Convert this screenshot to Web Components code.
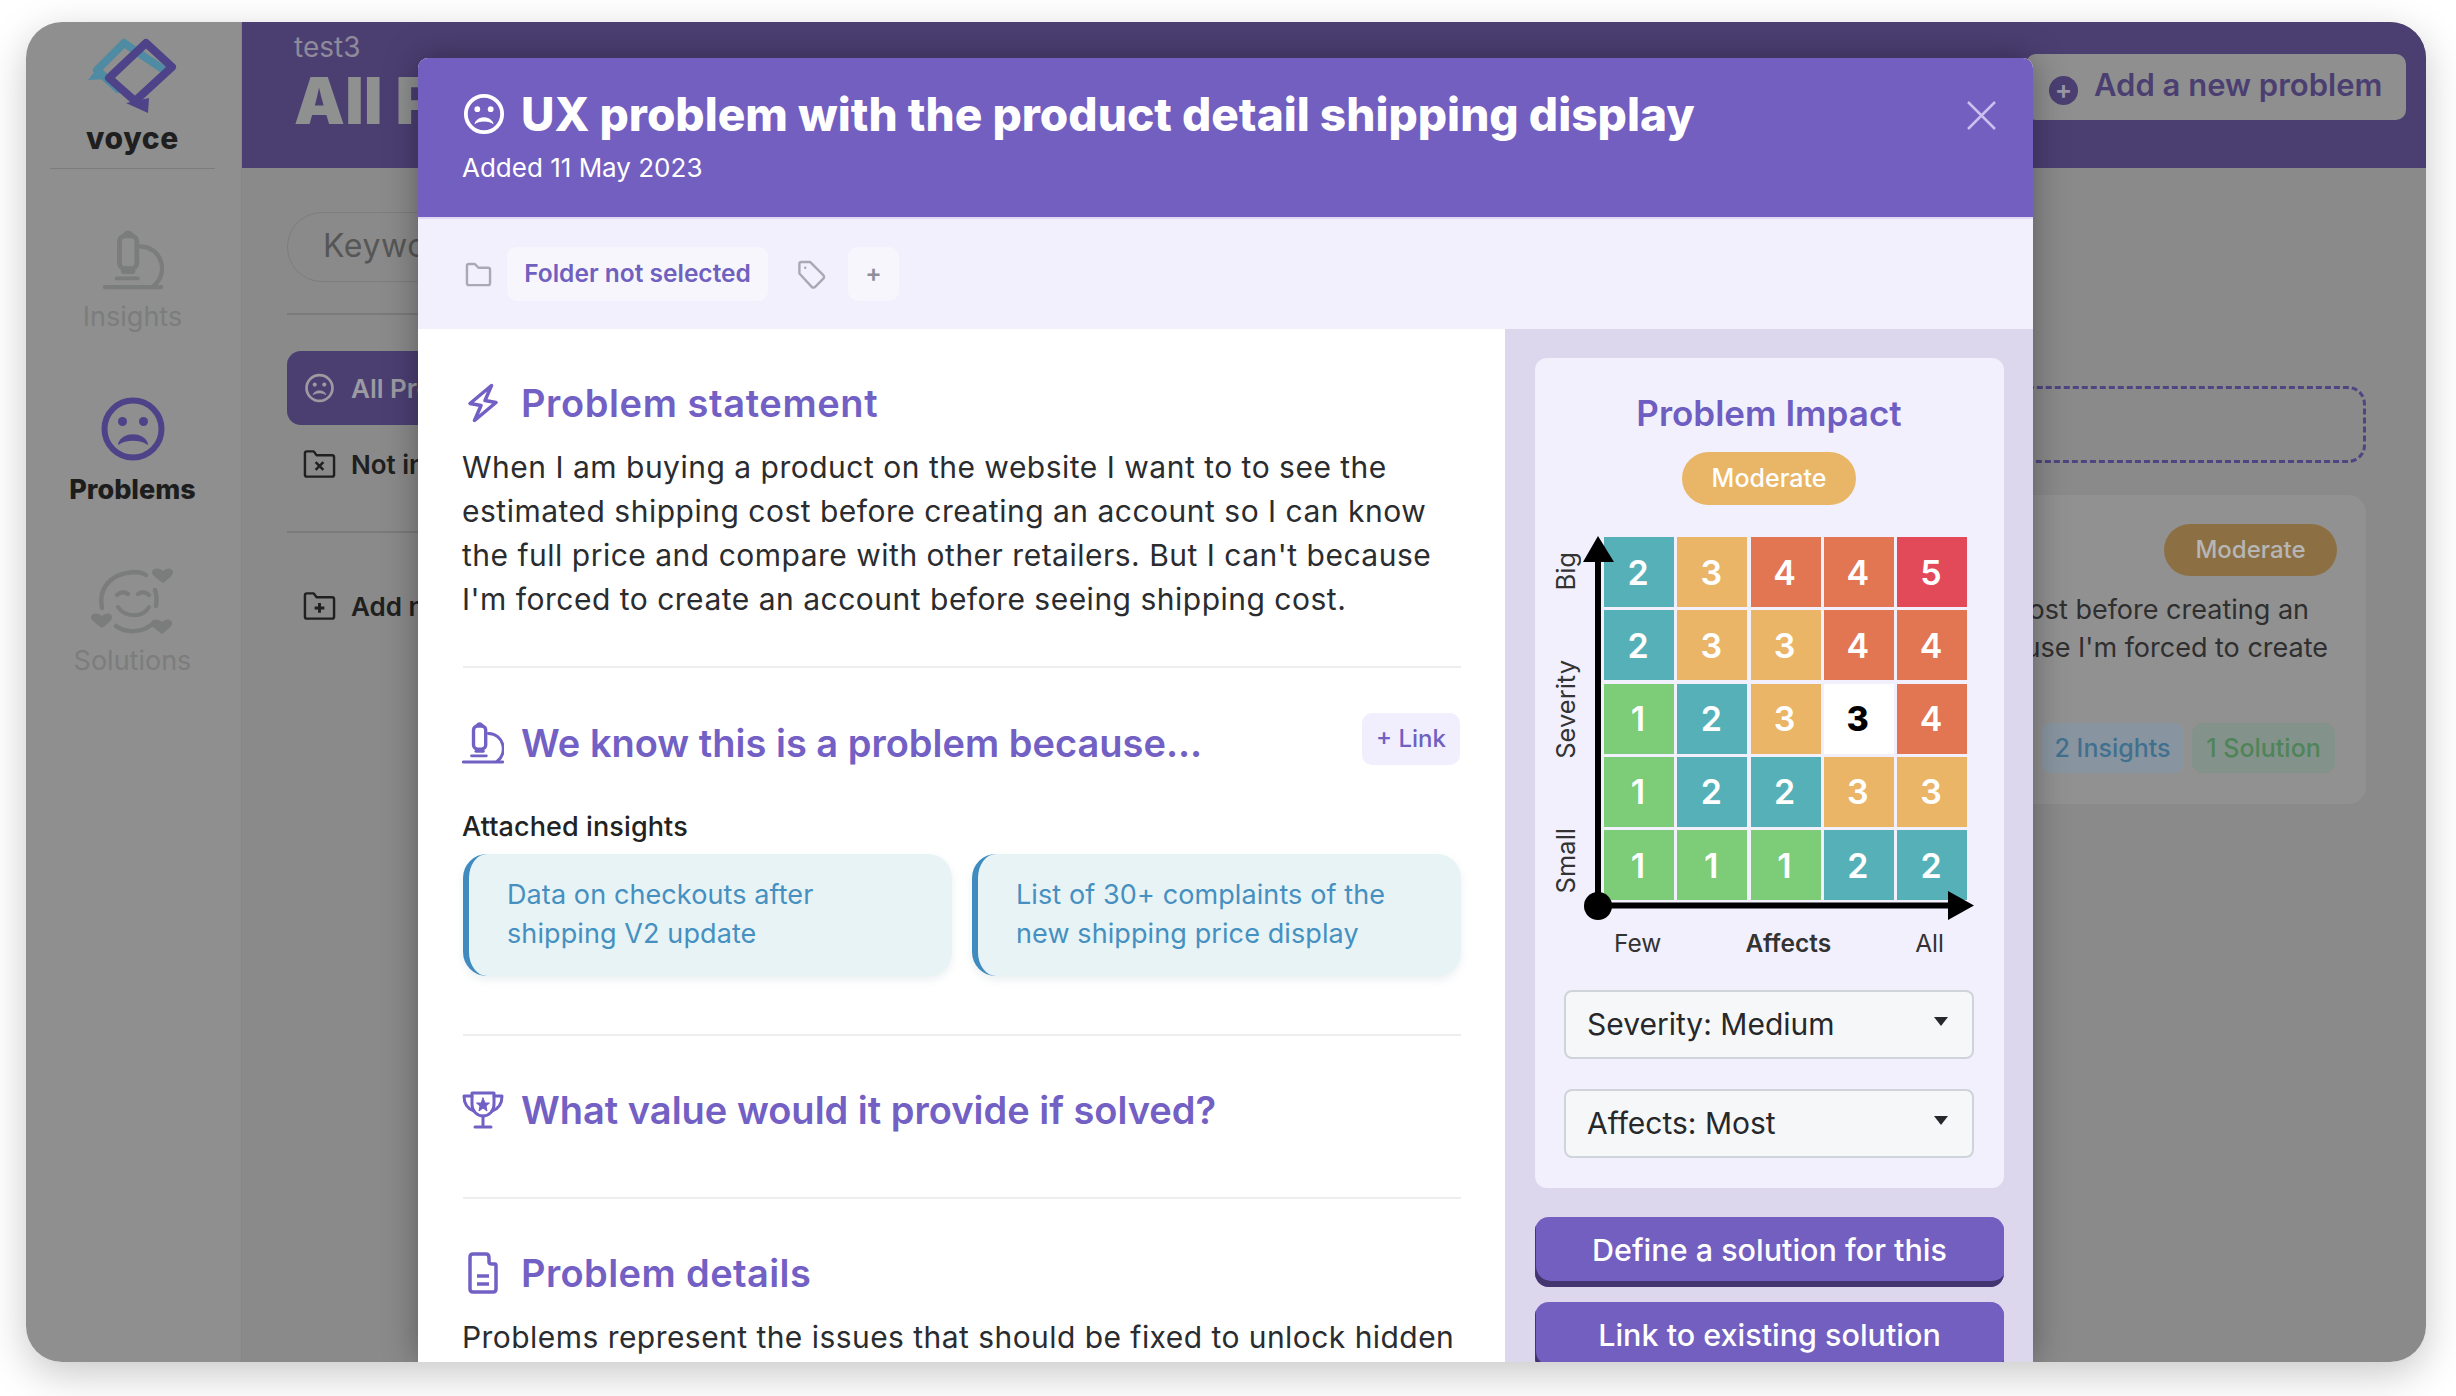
<!DOCTYPE html>
<html>
<head>
<meta charset="utf-8">
<title>voyce problems</title>
<style>
html,body{margin:0;padding:0;background:#fff;height:100%;overflow:hidden}
body{font-family:Inter,"Noto Sans",sans-serif;color:#2a2c2f}
</style>
</head>
<body>
<app-window></app-window>
<script>
// icons
const frown = `<svg viewBox="0 0 44 44" width="100%" height="100%"><circle cx="22" cy="22" r="19" fill="none" stroke="currentColor" stroke-width="4"/><circle cx="15" cy="17" r="3" fill="currentColor"/><circle cx="29" cy="17" r="3" fill="currentColor"/><path d="M12.500 32C15 24 29 24 31.500 32C27 28.500 17 28.500 12.500 32Z" fill="currentColor" stroke="currentColor" stroke-width="1" stroke-linejoin="round"/></svg>`
const scope = `<svg viewBox="0 0 62 62" width="100%" height="100%" fill="none" stroke="currentColor" stroke-linecap="round"><rect x="17" y="6" width="18" height="34" rx="6" stroke-width="5"/><path d="M22 5 Q26 0 30 5" stroke-width="4"/><path d="M21 43 L31 43" stroke-width="5"/><path d="M14 50 H36" stroke-width="4"/><path d="M2 59 H60" stroke-width="4.500"/><path d="M39 17 C62 18 68 46 52 58" stroke-width="4.500"/></svg>`
const bolt = `<svg viewBox="0 0 30 40" width="100%" height="100%" fill="none" stroke="currentColor" stroke-width="3.500" stroke-linejoin="round"><path d="M23.500 2.500 L2 20.500 L13 22.500 L6.500 37.500 L28 19.500 L17 17.500 Z"/></svg>`
const trophy = `<svg viewBox="0 0 42 38" width="100%" height="100%" fill="none" stroke="currentColor" stroke-width="3" stroke-linejoin="round" stroke-linecap="round"><path d="M10 2 H32 V13 C32 21 26 25 21 25 C16 25 10 21 10 13 Z"/><path d="M10 5 H2 C2 14 6 18 12 20"/><path d="M32 5 H40 C40 14 36 18 30 20"/><path d="M21 25 V35"/><path d="M13 36 H29"/><path d="M21 7 L23 12 L27.500 12 L24 15 L25 20 L21 17 L17 20 L18 15 L14.500 12 L19 12 Z" fill="currentColor" stroke-width="1"/></svg>`
const doc = `<svg viewBox="0 0 30 42" width="100%" height="100%" fill="none" stroke="currentColor" stroke-width="3.500" stroke-linejoin="round"><path d="M5 2 H18 Q21 2 21 6 V10 Q21 12 24 12 H27 Q28 12 28 14 V37 Q28 40 25 40 H5 Q2 40 2 37 V5 Q2 2 5 2Z"/><path d="M9 24 H21 M9 32 H21"/></svg>`
const folder = `<svg viewBox="0 0 28 26" width="100%" height="100%" fill="none" stroke="currentColor" stroke-width="2.500" stroke-linejoin="round"><path d="M2 4 Q2 2 4 2 H10 L14 6 H24 Q26 6 26 8 V22 Q26 24 24 24 H4 Q2 24 2 22 Z"/></svg>`
const tag = `<svg viewBox="0 0 30 30" width="100%" height="100%" fill="none" stroke="currentColor" stroke-width="2.500" stroke-linejoin="round"><path d="M3 4 Q3 2 5 2 H14 L28 16 Q29 18 28 19 L19 28 Q17 29 16 28 L3 14 Z"/><circle cx="9" cy="8" r="1.300" fill="currentColor" stroke="none"/></svg>`
const folderBox = sign => `<svg viewBox="0 0 34 30" width="100%" height="100%" fill="none" stroke="currentColor" stroke-width="2.500" stroke-linejoin="round"><path d="M2 4 Q2 2 4 2 H11 L14 6 H30 Q32 6 32 8 V26 Q32 28 30 28 H4 Q2 28 2 26 Z"/>${sign}</svg>`
const smile = `<svg viewBox="0 0 82 68" width="100%" height="100%" fill="none" stroke="currentColor" stroke-width="4.500" stroke-linecap="round"><path d="M11 40 C7 22 18 6 42 4 C48 4 52 5 55 7"/><path d="M64 22 C66 28 66 32 65 38"/><path d="M25 58 C34 65 50 65 60 57"/><path d="M26 27 Q31 22 37 26 M47 26 Q53 22 58 27"/><path d="M27 39 C34 50 52 50 58 39" stroke-width="4"/><g fill="currentColor" stroke="none"><path d="M72 15 C64 9 61 7 61 4 C61 0 68 -1 72 3 C76 -1 82 0 82 4 C82 7 79 10 72 15Z"/><path d="M11 60 C3 54 0 52 0 49 C0 45 7 44 11 48 C15 44 21 45 21 49 C21 52 18 55 11 60Z"/><path d="M71 66 C63 60 60 58 60 55 C60 51 67 50 71 54 C75 50 81 51 81 55 C81 58 78 61 71 66Z"/></g></svg>`
const logo = `<svg viewBox="86 36 90 78" width="90" height="78" fill="none" stroke-width="8" stroke-linejoin="round" stroke-linecap="round"><path d="M122 43 L95 70 L116 89 M122 43 L162 70" stroke="#4f8ba3"/><path d="M86 80 L106 79 L97 66 Z" fill="#4f8ba3" stroke="none"/><path d="M144 43 L170 67 L133 101 L107 78 Z" stroke="#4e4389"/><path d="M124 103 L147 98 L146 113 Z" fill="#4e4389" stroke="none"/></svg>`

// every element here is just markup in an open shadow root
class Base extends HTMLElement {
    connectedCallback() {
        if (this.shadowRoot) return
        this.attachShadow({ mode: 'open' }).innerHTML = this.render()
    }
    attr(name) { return this.getAttribute(name) || '' }
}
const define = (tag, render) => customElements.define(tag, class extends Base { render() { return render(this) } })

define('nav-item', e => `<style>
:host{display:flex;flex-direction:column;align-items:center;color:#7b7d7d}
:host([active]){color:#1d1d1d}
.i{display:flex;align-items:center;justify-content:center}
span{font-size:27px;line-height:36px;margin-top:${e.attr('gap')}px}
:host([active]) span{font-weight:800;font-size:27px}
:host([active]) .i{color:#4e4389}
</style><div class="i" style="width:${e.attr('w')}px;height:${e.attr('h')}px"><slot></slot></div><span>${e.attr('label')}</span>`)

define('side-nav', () => `<style>
:host{display:flex;flex-direction:column;width:216px;flex:none;background:#8f8f8f;align-items:center;border-right:1px solid #868686;box-sizing:border-box;padding-right:2px}
.brand{width:165px;height:147px;border-bottom:1px solid #7c7c7c;display:flex;flex-direction:column;align-items:center;padding-top:14px;box-sizing:border-box}
b{font-size:30px;font-weight:800;line-height:34px;color:#1f1f1f;margin-top:7px;letter-spacing:.6px}
.a{margin-top:61px}.b{margin-top:61px}.c{margin-top:60px}
</style>
<div class="brand">${logo}<b>voyce</b></div>
<nav-item class="a" label="Insights" w="62" h="60" gap="9">${scope}</nav-item>
<nav-item class="b" label="Problems" w="66" h="66" gap="10" active>${frown}</nav-item>
<nav-item class="c" label="Solutions" w="82" h="68" gap="7">${smile}</nav-item>`)

define('folder-list', () => `<style>
:host{display:block;width:352px;flex:none;color:#202020}
.search{height:70px;margin-top:44px;border:1.500px solid #7d7d7d;border-radius:36px;box-sizing:border-box;padding-left:35px;font-size:32px;letter-spacing:.6px;line-height:66px;color:#565656;white-space:nowrap;overflow:hidden}
hr{border:0;border-top:2px solid #7a7a7a;margin:0}
.row{height:74px;display:flex;align-items:center;gap:15px;padding-left:16px;font-size:26px;font-weight:600;white-space:nowrap;border-radius:14px}
.row i{width:33px;height:30px;display:block;flex:none}
.on{background:#4b3f72;color:#9c9aa2}
</style>
<div class="search">Keyword</div>
<hr style="margin-top:31px">
<div class="row on" style="margin-top:36px"><i>${frown}</i>All Problems</div>
<div class="row" style="margin-top:2px"><i>${folderBox('<path d="M13 13 L21 21 M21 13 L13 21"/>')}</i>Not in a</div>
<hr style="margin-top:30px">
<div class="row" style="margin-top:36px"><i>${folderBox('<path d="M17 12 V22 M12 17 H22" stroke-width="3"/>')}</i>Add new</div>`)

define('problem-row', () => `<style>
:host{display:block;margin-top:32px;height:309px;background:#919191;border-radius:18px;box-sizing:border-box;padding:29px 29px 0 0}
.top{display:flex;justify-content:flex-end}
.pill{width:173px;height:52px;border-radius:26px;background:#8c7044;color:#b6b6b6;font-size:24px;font-weight:500;line-height:52px;text-align:center}
.t{font-size:27px;line-height:38px;color:#2f2f2f;text-align:right;white-space:nowrap;margin-top:15px}
.t div:first-child{margin-right:28px}
.t div:last-child{margin-right:9px}
.chips{display:flex;justify-content:flex-end;gap:8px;margin-top:56px;margin-right:2px}
.chips span{height:50px;width:143px;border-radius:10px;font-size:25px;font-weight:500;line-height:50px;text-align:center}
.x{background:#8895a0;color:#41708f}.y{background:#83938b;color:#4f8459}
</style>
<div class="top"><div class="pill">Moderate</div></div>
<div class="t"><div>cost before creating an</div><div>because I'm forced to create</div></div>
<div class="chips"><span class="x">2 Insights</span><span class="y">1 Solution</span></div>`)

define('main-area', () => `<style>
:host{display:block;flex:1;background:#8a8a8a;min-width:0}
header{height:146px;background:#4b3f72;display:flex;justify-content:space-between;padding:0 20px 0 52px}
.sub{font-size:28px;line-height:34px;color:#8e8a9a;margin-top:8px}
h1{margin:1px 0 0;font-size:64px;line-height:72px;font-weight:900;color:#8f9090;white-space:nowrap}
.add{margin-top:32px;height:66px;width:380px;background:#8f8f8f;border-radius:10px;display:flex;align-items:center;box-sizing:border-box;padding-left:23px;gap:16px;color:#4b3f72;font-size:31px;font-weight:600;white-space:nowrap}
.add span{margin-top:-5px}
.add i{width:29px;height:29px;border-radius:50%;background:#4b3f72;color:#9a97a8;font-style:normal;font-size:26px;line-height:28px;text-align:center;margin-top:6px;flex:none}
.body{display:flex;padding:0 60px 0 45px}
.list{flex:1;min-width:0;padding-left:20px}
.drop{margin-top:218px;height:77px;border:3px dashed #4f4580;border-radius:18px;box-sizing:border-box}
</style>
<header><div><div class="sub">test3</div><h1>All Pro</h1></div><div class="add"><i>+</i><span>Add a new problem</span></div></header>
<div class="body"><folder-list></folder-list><div class="list"><div class="drop"></div><problem-row></problem-row></div></div>`)

define('section-head', e => `<style>
:host{display:flex;align-items:center;height:56px;color:#7360c4;margin-left:-1px}
.i{width:59px;flex:none;display:flex;justify-content:center;box-sizing:border-box;padding-right:17px}
.i div{width:${e.attr('w')}px;height:${e.attr('h')}px}
h2{margin:0;font-size:38px;font-weight:600;line-height:56px;white-space:nowrap;flex:1;letter-spacing:${e.attr('ls') || 0}px}
</style><div class="i"><div><slot name="icon"></slot></div></div><h2>${e.attr('label')}</h2><slot></slot>`)

define('insight-card', () => `<style>
:host{display:block;height:122px;width:489px;box-sizing:border-box;background:#e8f3f6;border-left:6px solid #3f8bbf;border-radius:24px;padding:21px 60px 0 38px;font-size:27px;letter-spacing:.1px;line-height:39px;color:#4590c0;box-shadow:0 4px 8px rgba(60,100,120,.1)}
</style><slot></slot>`)

define('impact-matrix', () => {
    const data = [
        [2, 3, 4, 4, 5],
        [2, 3, 3, 4, 4],
        [1, 2, 3, 0, 4],
        [1, 2, 2, 3, 3],
        [1, 1, 1, 2, 2]
    ]
    const colors = { 1: '#7ccc78', 2: '#55b1b7', 3: '#eab566', 4: '#e27552', 5: '#e34a59' }
    const cells = data.flat().map(v => v
        ? `<div style="background:${colors[v]}">${v}</div>`
        : `<div class="me">3</div>`).join('')
    return `<style>
:host{display:block;position:relative;margin:32px 0 0 -20px;width:430px}
.wrap{display:grid;grid-template-columns:60px 363px;grid-template-rows:363px 90px}
.sev{width:44px;height:363px;box-sizing:border-box;padding:15px 0 7px;display:flex;flex-direction:column;justify-content:space-between;align-items:center}
.sev span{writing-mode:vertical-rl;transform:rotate(180deg);font-size:25.500px;line-height:28px;color:#333}
.grid{display:grid;grid-template-columns:repeat(5,70px);grid-auto-rows:70px;gap:3.250px}
.grid div{display:flex;align-items:center;justify-content:center;color:#fff;font-size:34px;font-weight:600;padding-right:2px;box-sizing:border-box}
.grid .me{background:#fff;color:#000;font-weight:800}
.aff{grid-column:2;display:flex;justify-content:space-between;padding:24px 23px 0 10px;font-size:24.500px;line-height:38px;color:#333}
.aff b{font-weight:600}
svg{position:absolute;left:0;top:0;overflow:visible;pointer-events:none}
</style>
<div class="wrap"><div class="sev"><span>Big</span><span>Severity</span><span>Small</span></div><div class="grid">${cells}</div><div class="aff"><span>Few</span><b>Affects</b><span>All</span></div></div>
<svg width="430" height="400"><path d="M54 10 V369 M54 368.500 H410" stroke="#000" stroke-width="6" fill="none"/><path d="M54 -1 L39 25 L70 25Z M404 354 L430 368.500 L404 383Z"/><circle cx="54" cy="369" r="14"/></svg>`
})

define('select-box', e => `<style>
:host{display:flex;align-items:center;justify-content:space-between;height:69px;width:410px;box-sizing:border-box;background:#f6f7f9;border:2px solid #ced4da;border-radius:8px;padding:0 24px 0 21px;font-size:30px;color:#26282b}
span{margin-top:-2px}
i{border-left:7px solid transparent;border-right:7px solid transparent;border-top:9px solid #26282b;margin-top:-6px}
</style><span>${e.attr('label')}</span><i></i>`)

define('action-button', e => `<style>
:host{display:block;height:70px;background:#735fc0;border-radius:14px;box-shadow:inset 2px -7px 0 -1px #43356f,inset -2px 0 0 #735fc0;color:#fff;font-size:30.500px;font-weight:500;line-height:65px;text-align:center;white-space:nowrap}
</style><slot></slot>`)

define('problem-modal', () => `<style>
:host{display:block;position:absolute;left:392px;top:36px;width:1615px;bottom:0;border-radius:10px 10px 0 0;overflow:hidden;background:#fff}
.head{height:159px;background:#735fc0;color:#fff;box-sizing:border-box;padding-left:45px;position:relative}
.ttl{display:flex;align-items:center;height:72px;padding-top:20px;gap:16px;box-sizing:content-box}
.ttl i{width:42px;height:42px;flex:none}
.ttl h1{margin:0;font-size:46px;line-height:56px;font-weight:800;white-space:nowrap}
.added{font-size:26px;line-height:36px;margin-top:0;margin-left:-1px}
.x{position:absolute;left:1549px;top:43px;width:29px;height:29px;color:#cbbfee}
.bar{height:112px;background:#f2f0fd;border-top:2px solid #ded8f5;box-sizing:border-box;display:flex;align-items:center;padding-left:47px}
.bar i{display:block;flex:none;color:#a9a9b4}
.chip{height:54px;background:#f7f6fd;border-radius:10px;display:flex;align-items:center;justify-content:center;font-size:24.500px;font-weight:600;color:#7060c0;padding-bottom:2px;box-sizing:border-box}
.cols{display:flex;height:1033px}
.left{flex:1;box-sizing:border-box;padding:46px 44px 0 45px;min-width:0}
p{margin:0 0 0 -1px;font-size:30px;letter-spacing:.5px;line-height:44px;color:#2a2c2f}
hr{border:0;border-top:2px solid #eee;margin:0}
.link{width:98px;height:52px;background:#f1effd;border-radius:10px;font-size:24px;font-weight:500;color:#7060c0;text-align:center;line-height:52px;margin:-8px 1px 0 0}
h3{margin:38px 0 0 -1px;font-size:27px;letter-spacing:.1px;line-height:36px;font-weight:500;color:#222}
.cards{display:flex;justify-content:space-between;margin-top:9px}
.right{width:528px;flex:none;background:#dcd7ec;box-sizing:border-box;padding:29px 29px 0 30px}
.card{background:#f2f0fd;border-radius:12px;height:830px;box-sizing:border-box;padding:30px 30px 0 29px}
h4{margin:0;text-align:center;font-size:35px;line-height:50px;font-weight:600;color:#6e5ec2}
.mod{width:174px;height:53px;border-radius:27px;margin:14px auto 0;background:#e9b566;color:#fff;font-size:25px;font-weight:500;line-height:53px;text-align:center}
select-box{margin-bottom:30px}
</style>
<div class="head">
  <div class="ttl"><i>${frown}</i><h1>UX problem with the product detail shipping display</h1></div>
  <div class="added">Added 11 May 2023</div>
  <svg class="x" viewBox="0 0 29 29" fill="none" stroke="currentColor" stroke-width="2.500"><path d="M1 1 L28 28 M28 1 L1 28"/></svg>
</div>
<div class="bar">
  <i style="width:27px;height:25px">${folder}</i>
  <div class="chip" style="width:261px;margin-left:15px">Folder not selected</div>
  <i style="width:30px;height:29px;margin-left:28px">${tag}</i>
  <div class="chip" style="width:51px;margin-left:22px;color:#8f8f9b">+</div>
</div>
<div class="cols">
  <div class="left">
    <section-head label="Problem statement" ls="0.6" w="30" h="40"><span slot="icon">${bolt}</span></section-head>
    <p style="margin-top:14px">When I am buying a product on the website I want to to see the estimated shipping cost before creating an account so I can know the full price and compare with other retailers. But I can't because I'm forced to create an account before seeing shipping cost.</p>
    <hr style="margin-top:45px">
    <section-head label="We know this is a problem because..." w="42" h="42" style="margin-top:47px"><span slot="icon">${scope}</span><div class="link">+ Link</div></section-head>
    <h3>Attached insights</h3>
    <div class="cards"><insight-card>Data on checkouts after shipping V2 update</insight-card><insight-card>List of 30+ complaints of the new shipping price display</insight-card></div>
    <hr style="margin-top:58px">
    <section-head label="What value would it provide if solved?" w="42" h="38" style="margin-top:46px"><span slot="icon">${trophy}</span></section-head>
    <hr style="margin-top:59px">
    <section-head label="Problem details" ls="0.4" w="30" h="42" style="margin-top:46px"><span slot="icon">${doc}</span></section-head>
    <p style="margin-top:14px;white-space:nowrap;letter-spacing:.45px">Problems represent the issues that should be fixed to unlock hidden</p>
  </div>
  <div class="right">
    <div class="card">
      <h4>Problem Impact</h4>
      <div class="mod">Moderate</div>
      <impact-matrix></impact-matrix>
      <select-box label="Severity: Medium"></select-box>
      <select-box label="Affects: Most"></select-box>
    </div>
    <action-button style="margin-top:29px">Define a solution for this</action-button>
    <action-button style="margin-top:15px">Link to existing solution</action-button>
  </div>
</div>`)

define('app-window', () => `<style>
:host{display:block;position:relative;width:2400px;height:1340px;margin:22px 0 0 26px;border-radius:36px;box-shadow:0 12px 40px rgba(0,0,0,.22)}
.clip{position:absolute;inset:0;border-radius:36px;overflow:hidden;display:flex}
.s{position:absolute;left:392px;top:36px;width:1615px;bottom:0;box-shadow:0 0 34px rgba(0,0,0,.35);border-radius:10px 10px 0 0}
</style><div class="clip"><side-nav></side-nav><main-area></main-area><div class="s"></div><problem-modal></problem-modal></div>`)
</script>
</body>
</html>
